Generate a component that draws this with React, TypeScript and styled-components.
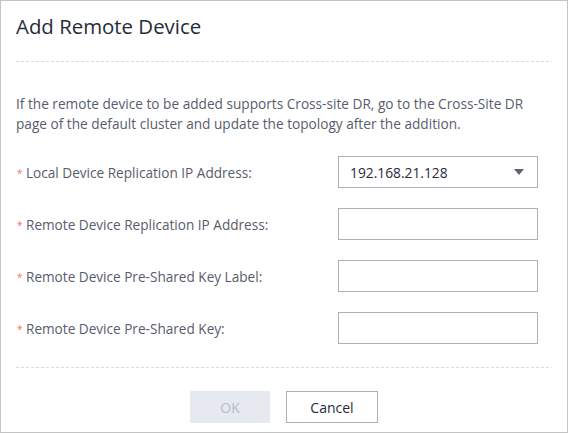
import React from "react";
import styled, { createGlobalStyle } from "styled-components";

const Global = createGlobalStyle`
  html, body { margin: 0; padding: 0; background: #fff; }
  body { font-family: "Open Sans", "Noto Sans", sans-serif; }
  * { box-sizing: border-box; }
`;

const Dialog = styled.div`
  width: 568px;
  height: 433px;
  border: 1px solid #c4c4c4;
  background: #fff;
  display: flex;
  flex-direction: column;
`;

const Header = styled.div`
  height: 60px;
  padding: 12px 15px 0;
`;

const Title = styled.h1`
  margin: 0;
  font-size: 20.4px;
  line-height: 26px;
  font-weight: 400;
  color: #252b3a;
`;

const Divider = styled.div`
  height: 1px;
  margin: 0 15px;
  background-image: repeating-linear-gradient(
    to right,
    #d9dbe2 0,
    #d9dbe2 3px,
    transparent 3px,
    transparent 5px
  );
`;

const Body = styled.div`
  padding: 32px 15px 0;
  height: 305px;
`;

const Notice = styled.p`
  margin: 0 0 22px;
  font-size: 13.65px;
  line-height: 20px;
  color: #575d6c;
`;

const Form = styled.div`
  display: grid;
  grid-template-columns: 1fr 200px;
  row-gap: 20px;
  padding-right: 14px;
`;

const Label = styled.label`
  display: flex;
  align-items: center;
  height: 32px;
  font-size: 13.6px;
  color: #575d6c;
`;

const Star = styled.span`
  color: #f66f6a;
  font-size: 10px;
  width: 10px;
  margin-top: 1px;
  padding-left: 1px;
`;

const Field = styled.div`
  position: relative;
  height: 32px;
  border: 1px solid #adb0b8;
  background: #fff;
  display: flex;
  align-items: center;
  padding: 0 13px 0 11px;
  font-size: 13.8px;
  color: #252b3a;
`;

const FieldText = styled.span`
  flex: 1;
`;

const Footer = styled.div`
  display: flex;
  justify-content: center;
  gap: 16px;
  padding-top: 23px;
`;

const Button = styled.button<{ $primary?: boolean }>`
  height: 32px;
  min-width: ${(p) => (p.$primary ? "80px" : "92px")};
  padding: 0 16px;
  font-family: inherit;
  font-size: 14px;
  border: 1px solid ${(p) => (p.$primary ? "#e6e9f0" : "#adb0b8")};
  background: ${(p) => (p.$primary ? "#e6e9f0" : "#fff")};
  color: ${(p) => (p.$primary ? "#b8bcc6" : "#252b3a")};
  cursor: pointer;
`;

const Arrow = () => (
  <svg width="10" height="6" viewBox="0 0 10 6">
    <path d="M0 0 L10 0 L5 6 Z" fill="#5e6370" />
  </svg>
);

const rows = [
  { label: "Local Device Replication IP Address:", value: "192.168.21.128", select: true },
  { label: "Remote Device Replication IP Address:", value: "" },
  { label: "Remote Device Pre-Shared Key Label:", value: "" },
  { label: "Remote Device Pre-Shared Key:", value: "" },
];

export default function App() {
  return (
    <>
      <Global />
      <Dialog>
        <Header>
          <Title>Add Remote Device</Title>
        </Header>
        <Divider />
        <Body>
          <Notice>
            If the remote device to be added supports Cross-site DR, go to the Cross-Site DR
            <br />
            page of the default cluster and update the topology after the addition.
          </Notice>
          <Form>
            {rows.map((r) => (
              <React.Fragment key={r.label}>
                <Label>
                  <Star>*</Star>
                  {r.label}
                </Label>
                <Field>
                  <FieldText>{r.value}</FieldText>
                  {r.select && <Arrow />}
                </Field>
              </React.Fragment>
            ))}
          </Form>
        </Body>
        <Divider />
        <Footer>
          <Button $primary>OK</Button>
          <Button>Cancel</Button>
        </Footer>
      </Dialog>
    </>
  );
}
